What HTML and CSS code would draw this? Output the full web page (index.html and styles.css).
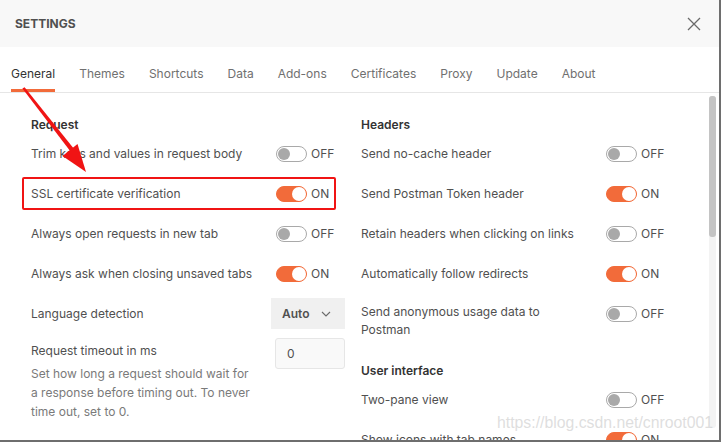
FILE: index.html
```html
<!DOCTYPE html>
<html>
<head>
<meta charset="utf-8">
<link rel="stylesheet" href="styles.css">
</head>
<body>
<div class="modal">
  <div class="header">
    <span class="title">SETTINGS</span>
    <svg class="close" width="14" height="14" viewBox="0 0 14 14"><path d="M1 1 L13 13 M13 1 L1 13" stroke="#6a6a6a" stroke-width="1.3" fill="none"/></svg>
  </div>
  <div class="tabs">
    <span class="tab active">General</span>
    <span class="tab">Themes</span>
    <span class="tab">Shortcuts</span>
    <span class="tab">Data</span>
    <span class="tab">Add-ons</span>
    <span class="tab">Certificates</span>
    <span class="tab">Proxy</span>
    <span class="tab">Update</span>
    <span class="tab">About</span>
  </div>
  <div class="content">
    <div class="columns">
      <div class="col">
        <div class="heading">Request</div>
        <div class="row"><span class="label">Trim keys and values in request body</span><span class="switch"><span class="toggle"></span><span class="state">OFF</span></span></div>
        <div class="row"><span class="label">SSL certificate verification</span><span class="switch"><span class="toggle on"></span><span class="state">ON</span></span></div>
        <div class="row"><span class="label">Always open requests in new tab</span><span class="switch"><span class="toggle"></span><span class="state">OFF</span></span></div>
        <div class="row"><span class="label">Always ask when closing unsaved tabs</span><span class="switch"><span class="toggle on"></span><span class="state">ON</span></span></div>
        <div class="row row-select"><span class="label">Language detection</span><span class="select">Auto<svg width="10" height="6" viewBox="0 0 10 6"><path d="M1 1 L5 5 L9 1" stroke="#6a6a6a" stroke-width="1.1" fill="none"/></svg></span></div>
        <div class="row row-timeout">
          <div class="label-block">
            <div class="label">Request timeout in ms</div>
            <div class="desc">Set how long a request should wait for a response before timing out. To never time out, set to 0.</div>
          </div>
          <span class="input">0</span>
        </div>
      </div>
      <div class="col">
        <div class="heading">Headers</div>
        <div class="row"><span class="label">Send no-cache header</span><span class="switch"><span class="toggle"></span><span class="state">OFF</span></span></div>
        <div class="row"><span class="label">Send Postman Token header</span><span class="switch"><span class="toggle on"></span><span class="state">ON</span></span></div>
        <div class="row"><span class="label">Retain headers when clicking on links</span><span class="switch"><span class="toggle"></span><span class="state">OFF</span></span></div>
        <div class="row"><span class="label">Automatically follow redirects</span><span class="switch"><span class="toggle on"></span><span class="state">ON</span></span></div>
        <div class="row row-two"><span class="label narrow">Send anonymous usage data to Postman</span><span class="switch"><span class="toggle"></span><span class="state">OFF</span></span></div>
        <div class="heading heading-next">User interface</div>
        <div class="row"><span class="label">Two-pane view</span><span class="switch"><span class="toggle"></span><span class="state">OFF</span></span></div>
        <div class="row"><span class="label">Show icons with tab names</span><span class="switch"><span class="toggle on"></span><span class="state">ON</span></span></div>
      </div>
    </div>
    <div class="scrolltrack"><div class="thumb"></div></div>
  </div>
  <div class="highlight"></div>
  <svg class="arrow" width="100" height="180" viewBox="0 0 100 180">
    <polygon points="22.4,88.5 24.6,87.3 73.7,148.6 70.3,151.2" fill="#f01414"/>
    <polygon points="86,172 62.5,156 77.5,144" fill="#f01414"/>
  </svg>
  <div class="watermark">https://blog.csdn.net/cnroot001</div>
</div>
</body>
</html>
```

FILE: styles.css
```css
* { box-sizing: border-box; }
html, body { margin: 0; padding: 0; }
body {
  width: 721px;
  height: 442px;
  background: #6e6e6e;
  font-family: Inter, "Noto Sans", sans-serif;
  overflow: hidden;
}
.modal {
  position: relative;
  width: 719px;
  height: 440px;
  background: #fff;
  display: flex;
  flex-direction: column;
  overflow: hidden;
}
.header {
  height: 47px;
  flex: none;
  background: #f8f8f8;
  display: flex;
  align-items: center;
  justify-content: space-between;
  padding: 0 18px 0 15px;
}
.title {
  font-size: 12px;
  font-weight: 700;
  color: #505050;
}
.close { display: block; }
.tabs {
  flex: none;
  display: flex;
  gap: 24px;
  padding-left: 11px;
  border-bottom: 1px solid #e6e6e6;
  height: 46px;
}
.tab {
  padding-top: 19px;
  line-height: 16px;
  height: 45px;
  font-size: 12px;
  color: #707070;
  border-bottom: 3px solid transparent;
}
.tab.active {
  color: #333;
  border-bottom-color: #f26b3a;
}
.content {
  flex: 1;
  display: flex;
  min-height: 0;
  overflow: hidden;
}
.columns {
  flex: 1;
  display: flex;
  gap: 16px;
  padding: 23px 0 0 31px;
}
.col {
  width: 314px;
  display: flex;
  flex-direction: column;
}
.col > * { flex: none; }
.heading {
  font-size: 12px;
  font-weight: 600;
  color: #333;
  line-height: 18px;
}
.heading-next { margin-top: 12px; }
.row {
  display: flex;
  justify-content: space-between;
  align-items: flex-start;
  padding: 11px 0;
  min-height: 40px;
}
.label {
  font-size: 12px;
  line-height: 18px;
  color: #505050;
}
.label.narrow { width: 190px; }
.row-two { padding-top: 9px; }
.row-two .switch { margin-top: 2px; }
.switch {
  width: 70px;
  flex: none;
  display: flex;
  align-items: center;
  padding-left: 1px;
}
.toggle {
  width: 31px;
  height: 16px;
  border: 1px solid #a9a9a9;
  border-radius: 8px;
  background: #fff;
  position: relative;
  flex: none;
}
.toggle::after {
  content: "";
  position: absolute;
  top: 1px;
  left: 1px;
  width: 12px;
  height: 12px;
  border-radius: 50%;
  background: #a9a9a9;
}
.toggle.on {
  background: #f26b3a;
  border-color: #f26b3a;
}
.toggle.on::after {
  left: auto;
  right: 0;
  top: 0;
  width: 14px;
  height: 14px;
  background: #fff;
}
.state {
  margin-left: 4px;
  font-size: 12px;
  color: #505050;
  line-height: 16px;
  padding-top: 1px;
}
.row-select { padding: 4px 0 5px; align-items: center; }
.select {
  width: 74px;
  height: 31px;
  background: #f0f0f0;
  display: flex;
  align-items: center;
  justify-content: space-between;
  padding: 0 14px 0 11px;
  font-size: 12px;
  font-weight: 600;
  color: #505050;
}
.row-timeout { padding: 4px 0 0; }
.label-block { width: 222px; padding-top: 4px; }
.desc {
  margin-top: 4px;
  font-size: 12px;
  line-height: 19px;
  color: #7a7a7a;
}
.input {
  width: 70px;
  height: 31px;
  border: 1px solid #e6e6e6;
  border-radius: 3px;
  background: #f9f9f9;
  font-size: 12px;
  color: #505050;
  line-height: 29px;
  padding-left: 11px;
}
.scrolltrack {
  width: 7px;
  margin: 3px 3px 12px 0;
  background: #f3f3f3;
  border-radius: 3px;
}
.thumb {
  width: 7px;
  height: 141px;
  background: #c4c4c4;
  border-radius: 3px;
}
.highlight {
  position: absolute;
  left: 22px;
  top: 177px;
  width: 314px;
  height: 33px;
  border: 2px solid #f01414;
  border-radius: 2px;
}
.arrow {
  position: absolute;
  left: 0;
  top: 0;
}
.watermark {
  position: absolute;
  left: 497px;
  top: 414px;
  font-family: "Liberation Sans", Arial, sans-serif;
  font-size: 15.8px;
  color: rgba(200, 200, 200, 0.6);
  white-space: nowrap;
}
```
